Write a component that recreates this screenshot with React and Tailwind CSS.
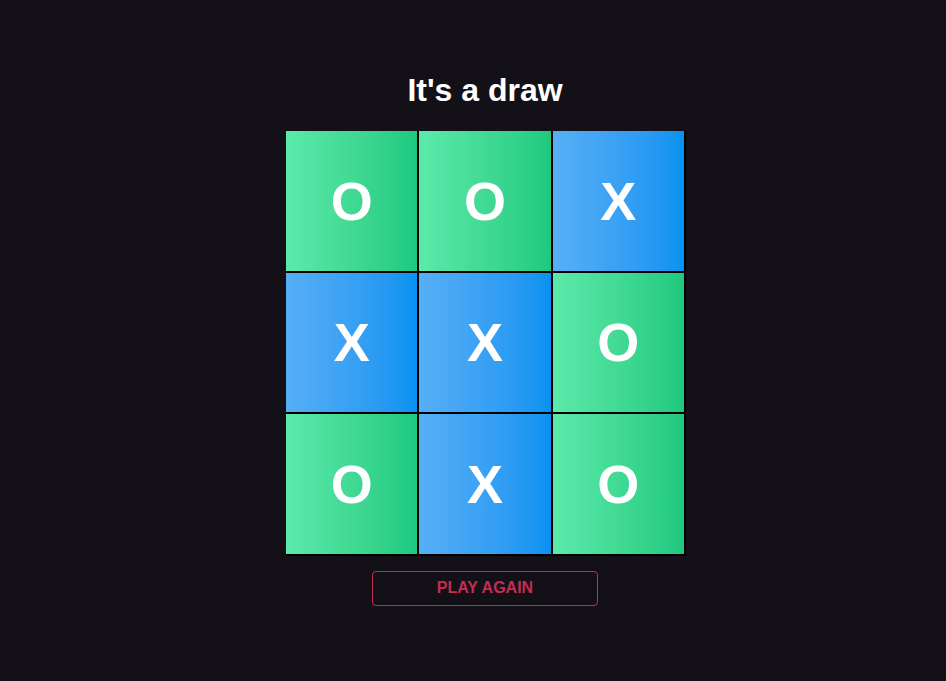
const board = ["O", "O", "X", "X", "X", "O", "O", "X", "O"];

const Cell = ({ value }) => {
  const bg =
    value === "X"
      ? "bg-linear-to-r from-[#56aff6] to-[#0592f1]"
      : "bg-linear-to-r from-[#5beaaa] to-[#1dc97f]";
  return (
    <div
      className={`${bg} h-[141.67px] border-r-2 border-b-2 border-black flex items-center justify-center`}
    >
      <span className="text-white font-bold text-[54px] leading-none">{value}</span>
    </div>
  );
};

const App = () => {
  return (
    <div
      className="min-h-[681px] bg-[#131117] pl-[26px] pt-[70px] flex flex-col items-center"
      style={{ fontFamily: '"Liberation Sans", Arial, sans-serif' }}
    >
      {/* Status */}
      <h1 className="text-white font-bold text-[32px] leading-10 mb-[21px] -ml-[2px]">It's a draw</h1>

      {/* Board */}
      <div className="grid grid-cols-3 w-[400px]">
        {board.map((v, i) => (
          <Cell key={i} value={v} />
        ))}
      </div>

      {/* Reset */}
      <button className="mt-[15px] -ml-[2px] w-[226px] h-[35px] border border-[#c42d52] rounded-[4px] text-[#c42d52] font-bold text-base flex items-center justify-center">
        PLAY AGAIN
      </button>
    </div>
  );
};

export default App;
